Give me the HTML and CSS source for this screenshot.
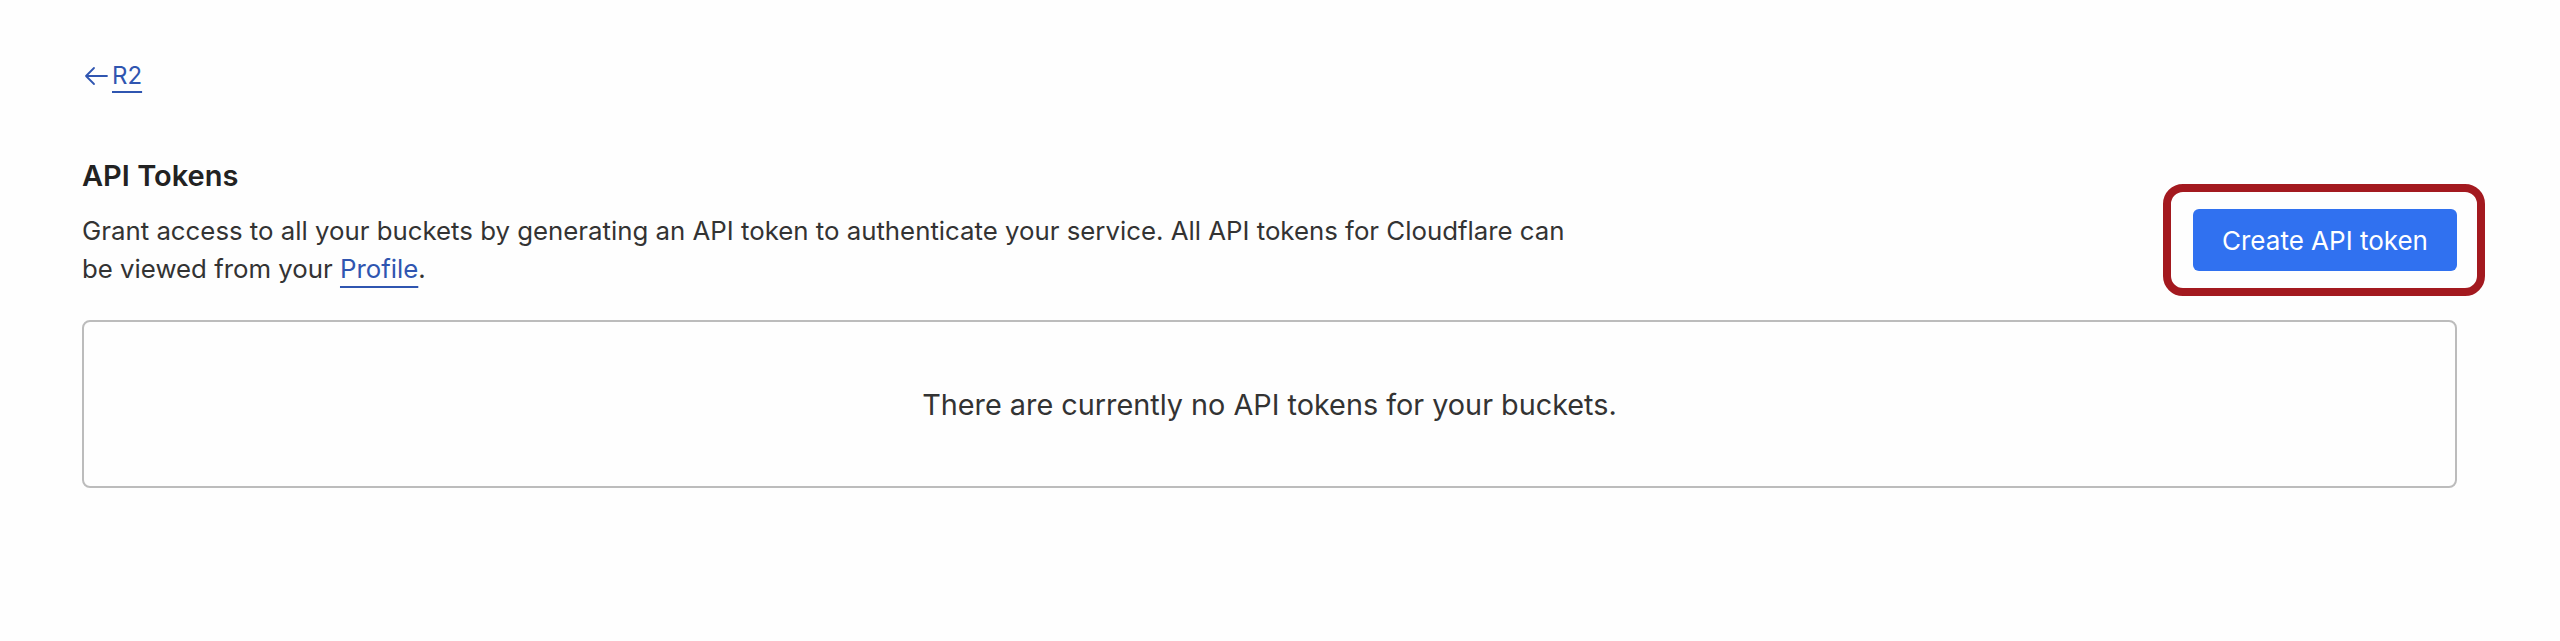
FILE: index.html
```html
<!DOCTYPE html>
<html lang="en">
<head>
  <meta charset="UTF-8">
  <meta name="viewport" content="width=device-width, initial-scale=1.0">
  <title>R2 - API Tokens</title>
  <link rel="stylesheet" href="styles.css">
</head>
<body>
  <main class="page">
    <a class="back-link" href="#">
      <svg class="back-arrow" width="24" height="20" viewBox="0 0 24 20" aria-hidden="true">
        <path d="M23 10H2M10 2L2 10l8 8" fill="none" stroke="currentColor" stroke-width="1.8" stroke-linecap="round" stroke-linejoin="round"/>
      </svg>
      <span class="back-text">R2</span>
    </a>

    <section class="tokens">
      <div class="tokens-header">
        <div class="tokens-intro">
          <h2>API Tokens</h2>
          <p>Grant access to all your buckets by generating an API token to authenticate your service. All API tokens for Cloudflare can be viewed from your <a href="#">Profile</a>.</p>
        </div>
        <div class="highlight">
          <button class="btn-primary">Create API token</button>
        </div>
      </div>

      <div class="empty-state">There are currently no API tokens for your buckets.</div>
    </section>
  </main>
</body>
</html>
```

FILE: styles.css
```css
body{
  margin: 0;
  background: #fefefe;
  font-family: Inter, "Liberation Sans", sans-serif;
  color: #333;
}
.page{
  padding: 60px 103px 0 82px;
}
.back-link{
  display: inline-flex;
  align-items: center;
  gap: 4px;
  color: #2f55b0;
  text-decoration: none;
  font-size: 24px;
  line-height: 32px;
}
.back-arrow{
  margin-left: 2px;
}
.back-text{
  text-decoration: underline;
  text-decoration-thickness: 2px;
  text-underline-offset: 7px;
}
.tokens{
  margin-top: 66px;
}
.tokens-header{
  display: flex;
  justify-content: space-between;
  align-items: flex-start;
}
.tokens-intro h2{
  margin: 0;
  font-size: 29px;
  line-height: 36px;
  font-weight: 600;
  color: #222;
}
.tokens-intro p{
  margin: 18px 0 0;
  max-width: 1510px;
  font-size: 25.8px;
  line-height: 38px;
}
.tokens-intro a{
  color: #2f55b0;
  text-decoration: underline;
  text-decoration-thickness: 2px;
  text-underline-offset: 8px;
}
.highlight{
  position: relative;
  margin-top: 51px;
}
/* annotation frame drawn over the screenshot */
.highlight::after{
  content: "";
  position: absolute;
  top: -25px;
  bottom: -25px;
  left: -30px;
  right: -28px;
  border: 8px solid #a3191f;
  border-radius: 20px;
  pointer-events: none;
}
.btn-primary{
  display: block;
  width: 264px;
  height: 62px;
  border: none;
  border-radius: 6px;
  background: #3071f0;
  color: #fff;
  font-family: inherit;
  font-size: 26px;
}
.empty-state{
  margin-top: 32px;
  height: 164px;
  border: 2px solid #bcbcbc;
  border-radius: 8px;
  display: flex;
  align-items: center;
  justify-content: center;
  font-size: 28.8px;
  color: #333;
}
```
